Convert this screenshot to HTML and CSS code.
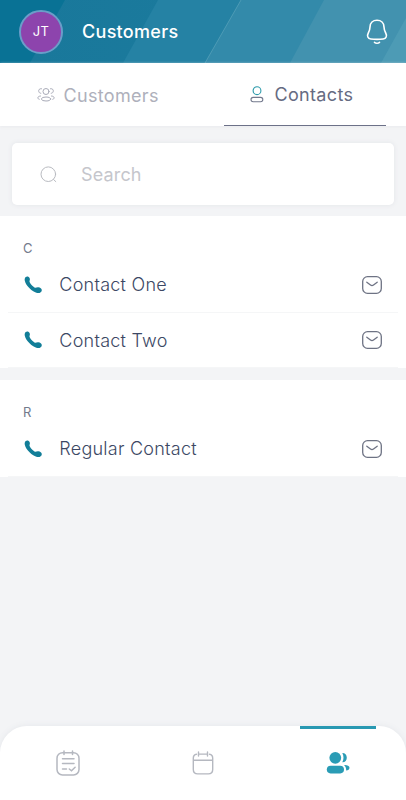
FILE: index.html
```html
<!DOCTYPE html>
<html lang="en">
<head>
<meta charset="utf-8">
<title>Customers</title>
<link rel="stylesheet" href="styles.css">
</head>
<body>
<svg class="defs" aria-hidden="true">
  <symbol id="phone" viewBox="0 0 20 20"><path d="M2.700 2C4 .9 6 1.500 6.700 3.200c.7 1.700-.6 2.600-.1 3.900.8 1.900 2.800 4.300 4.900 5.400 1.300.6 2.200-.4 3.800-.2 1.900.2 3.500 1.400 3.500 2.900-.1 2.100-2.300 3.200-4.700 2.700C9.300 16.900 2.900 10.900 1.800 5.800c-.3-1.600-.1-2.900.9-3.800z" fill="#127e98"/></symbol>
  <symbol id="mail" viewBox="0 0 20 18"><rect x=".7" y=".7" width="18.600" height="16.600" rx="4.800"/><path d="M4.800 6.200l3.700 2.900c1 .8 2 .8 3 0L15.200 6.200"/></symbol>
</svg>
<header class="header">
  <svg class="header-art" viewBox="0 0 406 63" preserveAspectRatio="none">
    <defs><linearGradient id="band" x1="0" x2="1"><stop offset="0" stop-color="#19789b"/><stop offset="1" stop-color="#1d7d9f"/></linearGradient></defs>
    <path d="M0 0h406v63H0z" fill="#097295"/>
    <path d="M65 0h341v63H30z" fill="url(#band)"/>
    <path d="M158 0h248v63H123z" fill="#2582a4"/>
    <path d="M241 0h165v63H205z" fill="#338aaa"/>
    <path d="M324 0h82v63H290z" fill="#4292af"/>
    <path d="M416 0v63h-35z" fill="#4d9bb5"/>
    <path d="M241 0l-36 63" stroke="#65a9c0" stroke-width=".6"/>
  </svg>
  <div class="avatar">JT</div>
  <h1 class="title">Customers</h1>
  <svg class="bell" viewBox="0 0 24 28" fill="none" stroke="#fff" stroke-width="1.600" stroke-linecap="round"><path d="M12 2.300c-4.100 0-6.900 2.700-7 6.700-.1 3.200-.4 3.800-1.700 6-1.700 3-.4 5.700 2.500 6 4.100.5 8.300.5 12.400 0 2.900-.3 4.200-3 2.500-6-1.300-2.200-1.600-2.800-1.700-6-.1-4-2.900-6.700-7-6.700z"/><path d="M9.500 24.300c1.300 1.200 3.700 1.200 5 0"/></svg>
</header>
<nav class="tabs">
  <div class="tab">
    <svg class="team" viewBox="0 0 18 16" fill="none" stroke="#a9abb8" stroke-linecap="round"><circle cx="9" cy="4.500" r="3"/><ellipse cx="9" cy="12" rx="4.600" ry="2"/><path d="M4.500 1.700C2.300 1.400 1.300 3 1.800 4.600c.3 1 1 1.600 2 1.700M13.500 1.700c2.200-.3 3.200 1.300 2.700 2.900-.3 1-1 1.600-2 1.700M3.500 9C1.600 9.100.8 10 .9 11c.1.700.6 1.100 1.300 1.300M14.500 9c1.900.1 2.700 1 2.600 2-.1.700-.6 1.100-1.300 1.300"/></svg>
    <span>Customers</span>
  </div>
  <div class="tab active">
    <svg class="person" viewBox="0 0 14 17" fill="none"><circle cx="7" cy="4.700" r="3.900" stroke="#2f9cac" stroke-width="1.100"/><rect x="1" y="11.400" width="11.800" height="4.400" rx="2.200" stroke="#73798d" stroke-width="1.100"/></svg>
    <span>Contacts</span>
  </div>
</nav>
<div class="search">
  <svg class="lens" viewBox="0 0 17 17" fill="none" stroke="#b9bbc1" stroke-width="1" stroke-linecap="round"><circle cx="8.300" cy="8.200" r="7.300"/><path d="M13.600 13.600l2.200 2"/></svg>
  <span>Search</span>
</div>
<main>
  <section class="group">
    <h2 class="letter">C</h2>
    <div class="row"><svg class="phone"><use href="#phone"/></svg><span class="name">Contact One</span><svg class="mail"><use href="#mail"/></svg></div>
    <div class="row"><svg class="phone"><use href="#phone"/></svg><span class="name">Contact Two</span><svg class="mail"><use href="#mail"/></svg></div>
  </section>
  <section class="group">
    <h2 class="letter">R</h2>
    <div class="row"><svg class="phone"><use href="#phone"/></svg><span class="name">Regular Contact</span><svg class="mail"><use href="#mail"/></svg></div>
  </section>
</main>
<footer class="bottom">
  <div class="item"><svg width="24" height="26" viewBox="0 0 24 26" fill="none" stroke="#b5b8c0" stroke-width="1.500" stroke-linecap="round"><rect x="1" y="2.700" width="22" height="22.300" rx="5.500"/><path d="M8 .9v3.600M16.500 .9v3.600M6.500 8.700h11.500M6.500 13.500h11.500M6.500 19h4M13.300 19l2.200 1.800 3.600-3.600"/></svg></div>
  <div class="item"><svg width="22" height="24" viewBox="0 0 22 24" fill="none" stroke="#b5b8c0" stroke-width="1.400" stroke-linecap="round"><path d="M4.500 3.200C2.300 3.500 1.300 5 1.300 7.200V18.500c0 3 1.400 4.400 4.400 4.400h10.600c3 0 4.400-1.400 4.400-4.400V7.200c0-2.200-1-3.700-3.200-4M6.500 3.100h9M6.500 1v4M15.500 1v4M1.300 9.300h19.400"/></svg></div>
  <div class="item current"><svg width="24" height="24" viewBox="0 0 24 24" fill="#2a9cb5"><circle cx="9.300" cy="6.800" r="5.900"/><rect x=".8" y="14.800" width="17.200" height="7.600" rx="3.800"/><path d="M16.300 2.100c2.600-.1 4.500 1.900 4.500 4.600s-1.900 4.700-4.500 4.500c1.600-2.700 1.600-6.400 0-9.100zM18 14c2.600-.3 5.500.7 5.500 2.800 0 1.600-1.300 2.600-3.300 2.800 0-2.500-.7-4.300-2.200-5.600z"/></svg></div>
</footer>
</body>
</html>
```
FILE: styles.css
```css
* { box-sizing: border-box; }
body {
  margin: 0;
  height: 800px;
  display: flex;
  flex-direction: column;
  overflow: hidden;
  background: #f3f4f6;
  font-family: Inter, "Liberation Sans", sans-serif;
}
svg { display: block; flex: none; }
.defs { position: absolute; width: 0; height: 0; }
.header {
  position: relative;
  height: 63px;
  flex: none;
  display: flex;
  align-items: center;
  padding: 0 17px 0 19px;
  color: #fff;
}
.header-art { position: absolute; inset: 0; width: 100%; height: 100%; z-index: -1; }
.avatar {
  width: 44px;
  height: 44px;
  border: 2px solid #6b9dc9;
  border-radius: 50%;
  background: #8d44ad;
  font-size: 13px;
  line-height: 39px;
  text-align: center;
  letter-spacing: .3px;
}
.title { margin: 0 auto 0 19px; font-size: 18px; line-height: 24px; font-weight: 500; letter-spacing: .3px; }
.bell { width: 24px; height: 28px; }
.tabs {
  height: 63px;
  flex: none;
  display: grid;
  grid-template-columns: 162px 162px;
  justify-content: space-between;
  padding: 0 20.5px 0 16px;
  background: #fff;
  box-shadow: 0 1px 3px #e9eaed;
}
.tab {
  display: flex;
  align-items: center;
  padding: 1px 0 0 20.5px;
  color: #aeb0bb;
  font-size: 18px;
  font-weight: 400;
  letter-spacing: .33px;
}
.team { width: 18px; height: 16px; margin-right: 9px; }
.tab.active { padding-left: 26px; color: #666b82; border-bottom: 1px solid #6c7188; }
.person { width: 14px; height: 17px; margin-right: 11px; }
.search {
  height: 62px;
  flex: none;
  margin: 17px 12px 11px;
  padding-left: 28px;
  display: flex;
  align-items: center;
  background: #fff;
  border-radius: 5px;
  box-shadow: 0 0 5px #e2e4e8;
  color: #c5c6cc;
  font-size: 18px;
  letter-spacing: .15px;
}
.lens { width: 17px; height: 17px; margin-right: 24px; }
.group { background: #fff; padding: 24px 8px 0; margin-bottom: 12px; }
.letter { margin: 0 0 0 15px; font-size: 13px; line-height: 17px; font-weight: 400; color: #737a8c; }
.row {
  height: 55px;
  display: flex;
  align-items: center;
  padding: 0 16px 0 15px;
  border-bottom: 1px solid #f5f6f7;
}
.row:first-of-type { height: 56px; }
.phone { width: 20px; height: 20px; }
.name { margin: 0 auto 0 16.300px; font-size: 18px; font-weight: 300; letter-spacing: .25px; color: #3c4864; }
.mail { width: 20px; height: 18px; fill: none; stroke: #6e7384; stroke-width: 1.300; stroke-linecap: round; }
.bottom {
  height: 74px;
  flex: none;
  margin-top: auto;
  display: grid;
  grid-template-columns: repeat(3, 1fr);
  background: #fff;
  border-radius: 27px 27px 0 0;
  box-shadow: 0 0 6px #e4e6ea;
}
.item { display: grid; place-items: center; }
.current { position: relative; }
.current::before {
  content: "";
  position: absolute;
  left: 50%;
  top: 0;
  width: 76px;
  height: 3px;
  margin-left: -38px;
  background: #2898b2;
}
```
